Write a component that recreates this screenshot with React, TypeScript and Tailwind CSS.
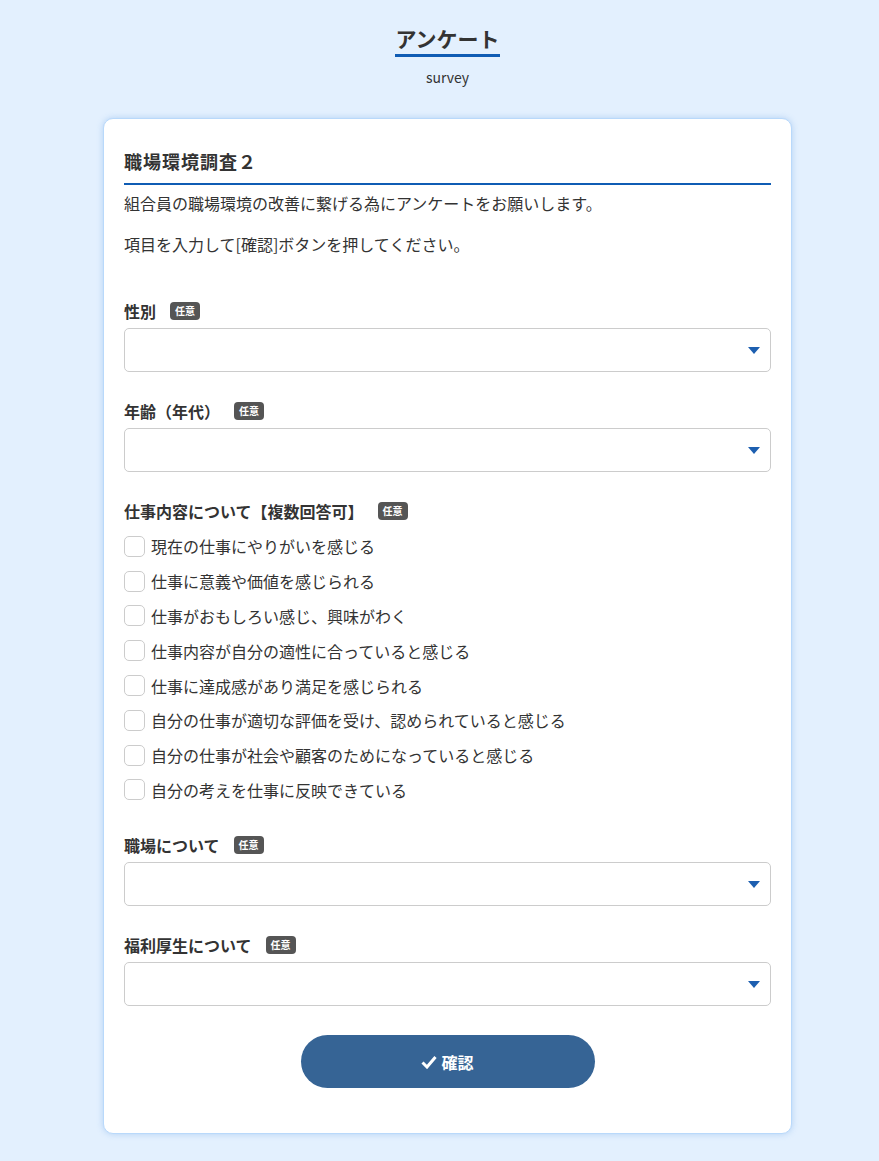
const font = "font-['Noto_Sans_CJK_JP','Noto_Sans',sans-serif]";

const workItems = [
  "現在の仕事にやりがいを感じる",
  "仕事に意義や価値を感じられる",
  "仕事がおもしろい感じ、興味がわく",
  "仕事内容が自分の適性に合っていると感じる",
  "仕事に達成感があり満足を感じられる",
  "自分の仕事が適切な評価を受け、認められていると感じる",
  "自分の仕事が社会や顧客のためになっていると感じる",
  "自分の考えを仕事に反映できている",
];

function Badge() {
  return (
    <span className="ml-[14px] inline-flex h-[18px] items-center rounded-[4px] bg-[#555555] px-[5px] text-[10px] font-bold leading-none text-white">
      任意
    </span>
  );
}

function Label({ text }: { text: string }) {
  return (
    <div className="flex items-center text-[16px] font-bold leading-[22px] text-[#333333]">
      <span>{text}</span>
      <Badge />
    </div>
  );
}

function SelectBox() {
  return (
    <div className="mt-[6px] flex h-[44px] items-center justify-end rounded-[5px] border border-[#cccccc] bg-white pr-[10px]">
      <svg width="12" height="7" viewBox="0 0 12 7">
        <path d="M0 0 L12 0 L6 7 Z" fill="#1d5fb0" />
      </svg>
    </div>
  );
}

function SelectField({ label }: { label: string }) {
  return (
    <div>
      <Label text={label} />
      <SelectBox />
    </div>
  );
}

export default function App() {
  return (
    <div className={`min-h-[1161px] bg-[#e3f0fe] pb-7 pl-[16px] pt-[24px] text-[#333333] ${font}`}>
      <div className="flex flex-col items-center">
        <h1 className="border-b-[3px] border-[#0f5cb4] pb-[1px] text-[21px] font-bold leading-[29px] text-[#333333]">
          アンケート
        </h1>
        <p className="mt-[10px] text-[14px] leading-[20px] text-[#333333]">survey</p>
      </div>

      <div className="mx-auto mt-[31px] w-[689px] rounded-[10px] border border-[#b9d9fb] bg-white px-5 pb-[45px] pt-[30px] shadow-[0_0_6px_rgba(120,170,230,0.45)]">
        <h2 className="border-b-2 border-[#0f5cb4] pb-[10px] text-[18px] font-bold leading-[24px] tracking-[1px] text-[#333333]">
          職場環境調査２
        </h2>
        <p className="mt-[7px] text-[16px] leading-[22px]">組合員の職場環境の改善に繋げる為にアンケートをお願いします。</p>
        <p className="mt-[19px] text-[16px] leading-[22px]">項目を入力して[確認]ボタンを押してください。</p>

        <div className="mt-[45px] flex flex-col gap-[28px]">
          <SelectField label="性別" />
          <SelectField label="年齢（年代）" />
          <div>
            <Label text="仕事内容について【複数回答可】" />
            <div className="mt-[7px] flex flex-col">
              {workItems.map((t) => (
                <label key={t} className="flex h-[34.8px] items-center gap-[6px] text-[16px] leading-[22px]">
                  <span className="h-[21px] w-[21px] shrink-0 rounded-[5px] border border-[#cccccc] bg-white" />
                  <span>{t}</span>
                </label>
              ))}
            </div>
          </div>
          <div className="mt-[-1px]">
            <SelectField label="職場について" />
          </div>
          <SelectField label="福利厚生について" />
        </div>

        <div className="mt-[29px] flex justify-center">
          <button
            type="button"
            className="flex h-[53px] w-[294px] items-center justify-center gap-1 rounded-full bg-[#366495] text-[16px] font-bold text-white"
          >
            <svg width="16" height="14" viewBox="0 0 16 14">
              <path d="M1.5 7.5 L6 12 L14.5 2" stroke="white" strokeWidth="3" fill="none" />
            </svg>
            確認
          </button>
        </div>
      </div>
    </div>
  );
}
